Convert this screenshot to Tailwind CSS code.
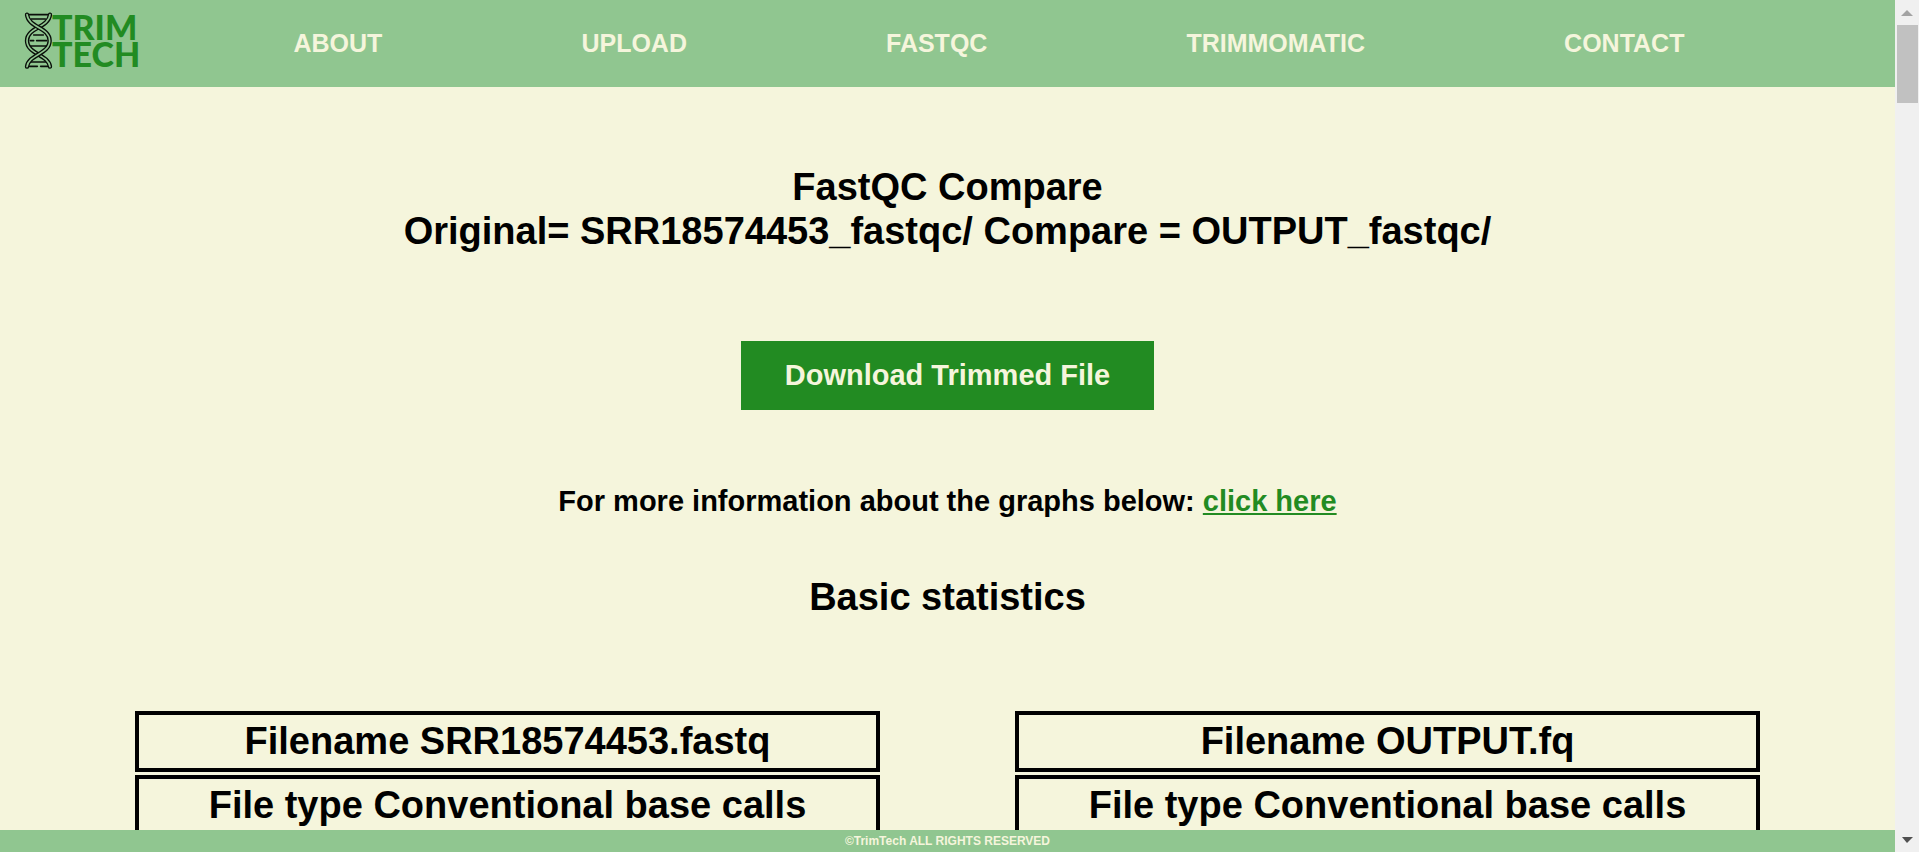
<!DOCTYPE html>
<html lang="en">
<head>
<meta charset="utf-8">
<title>TrimTech - FastQC Compare</title>
<script src="https://cdn.jsdelivr.net/npm/@tailwindcss/browser@4"></script>
</head>
<body class="flex h-screen overflow-hidden bg-[#f5f5dc] font-['Liberation_Sans',Arial,sans-serif] font-bold text-black">
  <div class="flex min-w-0 flex-1 flex-col">
    <header class="flex h-[87px] shrink-0 items-center bg-[#90c690] pl-6">
      <a href="#" aria-label="TrimTech home" class="shrink-0">
        <svg class="h-[87px] w-[120px]" viewBox="24 0 120 87" fill="none">
          <g transform="scale(.3333)" stroke-linecap="round" stroke-linejoin="round">
            <g stroke="#0a0f0a" stroke-width="5">
              <path d="M86 44H144M94 57H136M101 105H130M91 122H101M110 122H140M93 138H138M93 186H136M88 199H112M122 199H144"/>
            </g>
            <path d="M150 44C145 84 81 82 81 122C81 162 145 164 150 200" stroke="#0a0f0a" stroke-width="13"/>
            <path d="M150 44C145 84 81 82 81 122C81 162 145 164 150 200" stroke="#90c690" stroke-width="5"/>
            <path d="M81 44C86 84 149 82 149 122C149 162 85 164 81 200" stroke="#0a0f0a" stroke-width="13"/>
            <path d="M81 44C86 84 149 82 149 122C149 162 85 164 81 200" stroke="#90c690" stroke-width="5"/>
          </g>
          <g class="fill-[#228b22] font-[Lato,sans-serif] text-[34px] font-black">
            <text x="52" y="40">TRIM</text>
            <text x="52" y="67">TECH</text>
          </g>
        </svg>
      </a>
      <nav class="flex-1 pr-[111px] pb-0.5 pl-[50px]">
        <ul class="flex justify-around text-[25px] leading-7 text-[#f5f5dc]">
          <li><a href="#">ABOUT</a></li>
          <li><a href="#">UPLOAD</a></li>
          <li><a href="#">FASTQC</a></li>
          <li><a href="#">TRIMMOMATIC</a></li>
          <li><a href="#">CONTACT</a></li>
        </ul>
      </nav>
    </header>

    <main class="flex min-h-0 flex-1 flex-col items-center overflow-hidden pt-[78px] text-center">
      <h1 class="text-[38px] leading-[44px]">FastQC Compare<br>Original= SRR18574453_fastqc/ Compare = OUTPUT_fastqc/</h1>
      <button type="button" class="mt-[88px] h-[69px] shrink-0 bg-[#228b22] px-11 pb-0.5 text-[29px] leading-8 text-[#f5f5dc]">Download Trimmed File</button>
      <p class="mt-[75px] text-[29px] leading-8">For more information about the graphs below: <a href="#" class="text-[#228b22] underline">click here</a></p>
      <h2 class="mt-[58px] text-[38px] leading-[44px]">Basic statistics</h2>
      <div class="mt-[89px] grid w-full grid-cols-2 gap-[129px] px-[132px] text-[38px] leading-[44px]">
        <table class="w-full border-separate border-spacing-[3px]">
          <tbody>
            <tr><td class="border-4 border-black pt-1 pb-[5px]">Filename SRR18574453.fastq</td></tr>
            <tr><td class="border-4 border-black pt-1 pb-[5px]">File type Conventional base calls</td></tr>
          </tbody>
        </table>
        <table class="w-full border-separate border-spacing-[3px]">
          <tbody>
            <tr><td class="border-4 border-black pt-1 pb-[5px]">Filename OUTPUT.fq</td></tr>
            <tr><td class="border-4 border-black pt-1 pb-[5px]">File type Conventional base calls</td></tr>
          </tbody>
        </table>
      </div>
    </main>

    <footer class="shrink-0 bg-[#90c690] text-center text-[12px] leading-[22px] text-[#f5f5dc]">©TrimTech ALL RIGHTS RESERVED</footer>
  </div>

  <div class="flex w-6 shrink-0 flex-col items-center bg-[#f0f0f0]" aria-hidden="true">
    <svg class="h-[25px] w-6 shrink-0" viewBox="0 0 24 25"><path d="M12 10L18 16H6Z" fill="#a3a3a3"/></svg>
    <div class="h-[78px] w-[21px] bg-[#c1c1c1]"></div>
    <svg class="mt-auto h-[25px] w-6 shrink-0" viewBox="0 0 24 25"><path d="M7 10H18L12 16Z" fill="#505050"/></svg>
  </div>
</body>
</html>
